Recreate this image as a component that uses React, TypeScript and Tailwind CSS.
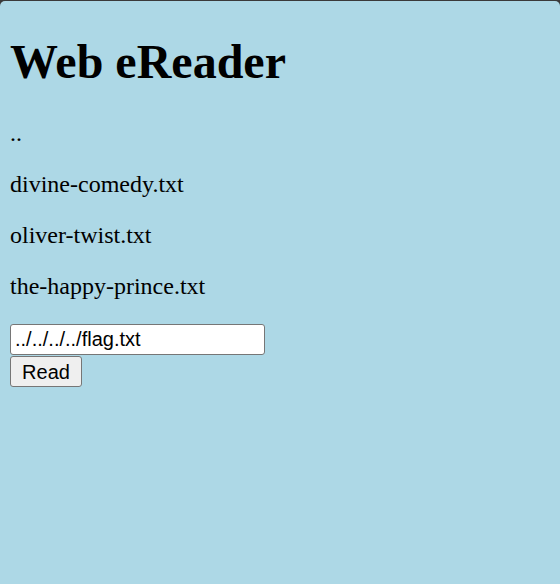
import React from 'react';

const files = ['..', 'divine-comedy.txt', 'oliver-twist.txt', 'the-happy-prince.txt'];

const App: React.FC = () => {
  return (
    <div className="bg-[#3a3a3a] pt-px min-h-[584px]">
      <div className="bg-[#add8e6] rounded-t-[5px] min-h-[583px] px-[10px] pt-[33px] font-['Liberation_Serif','Times_New_Roman',serif] text-black">
        <h1 className="text-[48px] font-bold leading-[55px] m-0">Web eReader</h1>

        {/* file list */}
        <div className="mt-[31px] flex flex-col gap-[23.5px]">
          {files.map((f) => (
            <p key={f} className="text-[24px] leading-[27.5px] m-0">
              {f}
            </p>
          ))}
        </div>

        <form className="mt-[23px] flex flex-col items-start" onSubmit={(e) => e.preventDefault()}>
          <input
            type="text"
            defaultValue="../../../../flag.txt"
            className="w-[255px] h-[31px] bg-white border-[1.5px] border-[#767676] rounded-[3px] px-[4px] pt-px text-[20px] font-['Liberation_Sans',Arial,sans-serif] outline-none"
          />
          <button
            type="submit"
            className="mt-[1px] w-[72px] h-[31px] bg-[#efefef] border-[1.5px] border-[#767676] rounded-[3px] text-[20px] font-['Liberation_Sans',Arial,sans-serif] text-black"
          >
            Read
          </button>
        </form>
      </div>
    </div>
  );
};

export default App;
